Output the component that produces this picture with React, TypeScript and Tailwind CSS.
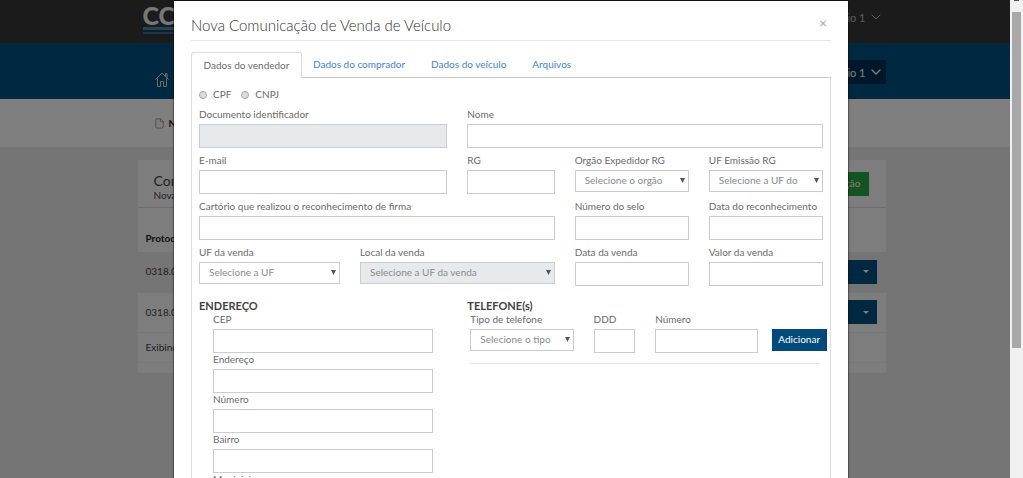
import type { ReactNode } from "react";
import { ChevronDown, File } from "lucide-react";

const border = "border border-[#ccc] rounded-none outline-none";

function Field({
  id,
  label,
  className = "",
  children,
}: {
  id: string;
  label: string;
  className?: string;
  children?: ReactNode;
}) {
  return (
    <div className={className}>
      <label htmlFor={id} className="block whitespace-nowrap leading-3 mb-1">
        {label}
      </label>
      {children ?? <input id={id} type="text" className={`block w-full h-6 px-2 bg-white ${border}`} />}
    </div>
  );
}

function Select({ id, text, disabled }: { id: string; text: string; disabled?: boolean }) {
  return (
    <div className="relative">
      <select
        id={id}
        disabled={disabled}
        className={`block w-full h-[22px] pl-[9px] pr-5 pb-0.5 appearance-none text-[#868b90] opacity-100 ${border} ${
          disabled ? "bg-[#e7eaed]" : "bg-white"
        }`}
      >
        <option>{text}</option>
      </select>
      <svg
        viewBox="0 0 5 5"
        className="absolute right-1 top-2 size-[5px] pointer-events-none"
        fill="#555"
        aria-hidden="true"
      >
        <path d="M0 0h5L2.5 5z" />
      </svg>
    </div>
  );
}

function Radio({ id, label }: { id: string; label: string }) {
  return (
    <div className="flex items-center gap-1.5">
      <input
        id={id}
        type="radio"
        name="documento"
        className="appearance-none size-2 rounded-full border border-[#aaa] bg-[#ddd]"
      />
      <label htmlFor={id}>{label}</label>
    </div>
  );
}

function HomeIcon() {
  return (
    <svg viewBox="0 0 14 15" className="w-3.5" fill="none" stroke="currentColor" aria-hidden="true">
      <path d="M.5 7.5 7 1l6.500 6.500M10.500 4.500V1.500h1.500V6M2.500 6.500v8H5.500V9.500h3v5h3v-8" />
    </svg>
  );
}

function Background() {
  return (
    <div className="h-full bg-[#eaeaea] text-[#444]">
      <header className="h-[43px] bg-[#363636]">
        <div className="max-w-[748px] mx-auto pl-[5px] pr-0.5 flex justify-between">
          <div className="pt-1 w-20">
            <div className="text-[25px] leading-[23px] font-black text-[#eee]">CCV</div>
            <div className="h-[3px] bg-[#3a8cc4]" />
            <div className="h-0.5 mt-0.5 bg-[#2d6f9e]" />
          </div>
          <button className="h-[34px] flex items-center gap-0.5 text-[11px] text-[#bbb]">
            Cartório 1 <ChevronDown size={16} strokeWidth={1.5} />
          </button>
        </div>
      </header>
      <nav className="h-14 bg-[#005080]">
        <div className="h-full max-w-[748px] mx-auto pl-[17px] pt-[17px] flex justify-between items-start">
          <a href="#inicio" aria-label="Início" className="pt-3 text-[#ddd]">
            <HomeIcon />
          </a>
          <button className="h-6 pl-1.5 pr-0.5 flex items-center gap-0.5 text-[11px] bg-[#003153] text-white">
            Cartório 1 <ChevronDown size={16} strokeWidth={2} />
          </button>
        </div>
      </nav>
      <div className="h-12 bg-white">
        <div className="h-full max-w-[748px] mx-auto pl-4 flex items-center gap-1 font-bold text-[#222]">
          <File size={11} strokeWidth={1.5} className="text-[#777]" />
          Nova
        </div>
      </div>
      <section className="max-w-[748px] mx-auto mt-[13px] pb-2.5 bg-[#fbfbfb]">
        <div className="h-12 pl-4 pr-[17px] flex justify-between items-center border-b border-[#ddd]">
          <div className="pt-1.5">
            <h2 className="text-[14px] leading-4">Comunicações</h2>
            <p className="leading-3">Nova Comunicação</p>
          </div>
          <button className="h-6 px-2 bg-[#28a745] text-white">Nova Comunicação</button>
        </div>
        <table className="w-full text-left">
          <thead>
            <tr className="h-11">
              <th className="pl-2 pt-4 font-bold text-[#222]">Protocolo</th>
              <td />
            </tr>
          </thead>
          <tbody>
            {["primeira", "segunda"].map((row) => (
              <tr key={row} className="h-10 border-b border-[#eaeaea] odd:bg-[#eaeaea]">
                <td className="pl-2">0318.0</td>
                <td className="pr-[9px]">
                  <button aria-label="Ações" className="ml-auto h-6 w-20 flex items-center justify-end pr-2 bg-[#005080]">
                    <svg viewBox="0 0 6 3" className="w-1.5" fill="#fff" aria-hidden="true">
                      <path d="M0 0h6L3 3z" />
                    </svg>
                  </button>
                </td>
              </tr>
            ))}
          </tbody>
        </table>
        <p className="h-[30px] pl-2 leading-7 border-b border-[#eee]">Exibindo</p>
      </section>
    </div>
  );
}

function SellerForm() {
  return (
    <form className="border border-t-0 border-[#ddd] px-[7px] pt-[9px] pb-4">
      <div className="flex gap-2.5 h-[15px] mb-1">
        <Radio id="cpf" label="CPF" />
        <Radio id="cnpj" label="CNPJ" />
      </div>

      <div className="pt-0.5 grid grid-cols-24 gap-x-5 gap-y-1.5">
        <Field id="documento" label="Documento identificador" className="col-span-10">
          <input id="documento" type="text" disabled className={`block w-full h-6 bg-[#e7eaed] ${border}`} />
        </Field>
        <Field id="nome" label="Nome" className="col-span-14" />

        <Field id="email" label="E-mail" className="col-span-10" />
        <Field id="rg" label="RG" className="col-span-4" />
        <Field id="orgao" label="Orgão Expedidor RG" className="col-span-5">
          <Select id="orgao" text="Selecione o orgão" />
        </Field>
        <Field id="ufrg" label="UF Emissão RG" className="col-span-5">
          <Select id="ufrg" text="Selecione a UF do" />
        </Field>

        <Field id="cartorio" label="Cartório que realizou o reconhecimento de firma" className="col-span-14" />
        <Field id="selo" label="Número do selo" className="col-span-5" />
        <Field id="reconhecimento" label="Data do reconhecimento" className="col-span-5" />

        <Field id="ufvenda" label="UF da venda" className="col-span-6">
          <Select id="ufvenda" text="Selecione a UF" />
        </Field>
        <Field id="local" label="Local da venda" className="col-span-8">
          <Select id="local" text="Selecione a UF da venda" disabled />
        </Field>
        <Field id="datavenda" label="Data da venda" className="col-span-5" />
        <Field id="valor" label="Valor da venda" className="col-span-5" />

        <section className="col-span-10 mt-1.5">
          <h3 className="text-[11px] leading-[15px] font-bold text-[#444]">ENDEREÇO</h3>
          <div className="px-3.5">
            <Field id="cep" label="CEP" />
            <Field id="endereco" label="Endereço" />
            <Field id="numero" label="Número" />
            <Field id="bairro" label="Bairro" />
            <Field id="municipio" label="Município" />
          </div>
        </section>

        <section className="col-span-14 mt-1.5">
          <h3 className="text-[11px] leading-[15px] font-bold text-[#444]">TELEFONE(s)</h3>
          <div className="mx-[3px] pb-2.5 grid grid-cols-6 gap-x-5 border-b border-[#e5e5e5]">
            <Field id="tipo" label="Tipo de telefone" className="col-span-2">
              <Select id="tipo" text="Selecione o tipo" />
            </Field>
            <Field id="ddd" label="DDD" />
            <Field id="telefone" label="Número" className="col-span-2" />
            <div className="pt-4 flex justify-center">
              <button type="button" className="shrink-0 h-[22px] w-[55px] pb-0.5 bg-[#004b7c] text-white">
                Adicionar
              </button>
            </div>
          </div>
        </section>
      </div>
    </form>
  );
}

export default function App() {
  return (
    <div className="relative h-screen overflow-hidden font-['Lato',sans-serif] text-[10px] leading-[15px]">
      <Background />
      <div className="absolute inset-0 bg-black/50 pt-px pr-px overflow-hidden">
        <div
          role="dialog"
          aria-labelledby="titulo"
          className="max-w-[674px] mx-auto px-[17px] bg-white text-[#6b6b6b] shadow-[0_0_2px_#000]"
        >
          <div className="h-10 pt-1 flex items-center justify-between border-b border-[#e5e5e5]">
            <h1 id="titulo" className="text-[15px] leading-5 pt-1 font-light text-[#333]">
              Nova Comunicação de Venda de Veículo
            </h1>
            <button aria-label="Fechar" className="px-1 text-[14px] text-[#aaa]">
              ×
            </button>
          </div>
          <div className="mt-[11px] flex text-[#4383d6]" role="tablist">
            <button
              role="tab"
              aria-selected="true"
              className="h-[26px] w-[111px] border border-b-0 border-[#ddd] rounded-t-[3px] text-[#6b6b6b]"
            >
              Dados do vendedor
            </button>
            <div className="grow flex gap-1 border-b border-[#ccc]">
              {["Dados do comprador", "Dados do veículo", "Arquivos"].map((tab) => (
                <button key={tab} role="tab" className="px-[11px]">
                  {tab}
                </button>
              ))}
            </div>
          </div>
          <SellerForm />
        </div>
      </div>
      <div className="absolute inset-y-0 right-0 w-[13px] px-0.5 pt-3 bg-[#f1f1f1]">
        <div className="absolute top-0 left-1 w-[5px] h-px bg-[#505050]" />
        <div className="h-[72%] bg-[#a8a8a8]" />
      </div>
    </div>
  );
}
